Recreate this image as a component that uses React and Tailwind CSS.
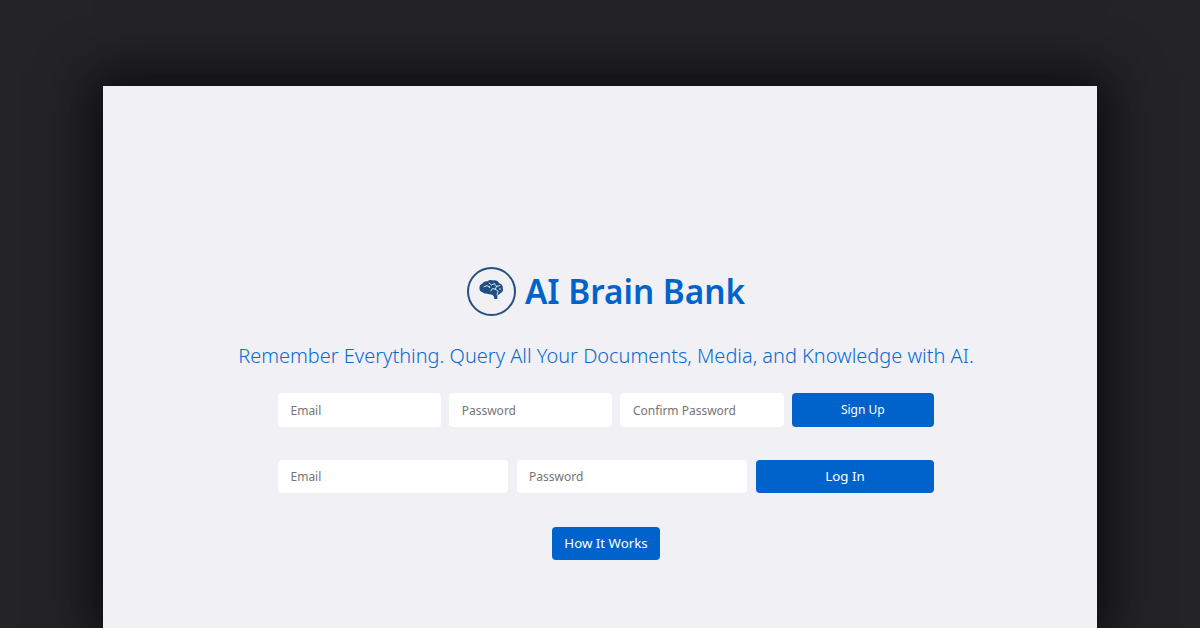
import React from "react";

function Field({ placeholder, type = "text", className = "min-w-0 flex-1" }) {
  return (
    <input
      type={type}
      placeholder={placeholder}
      className={`${className} h-full rounded-[4px] bg-white px-[12.5px] text-[12px] text-[#495057] outline-none placeholder:text-[#757575]`}
    />
  );
}

function BrainLogo() {
  return (
    <div className="flex h-[49px] w-[49px] shrink-0 items-center justify-center rounded-full border-2 border-[#26507f]">
      <svg width="26" height="24" viewBox="0 0 26 24" className="mt-[-2px]">
        <path
          fill="#1f4f82"
          d="M1.500 10.200C1 7.900 2.600 6 4.600 5.400 5.600 3.400 8 2.800 9.500 3.300 11 1.700 13.800 1.600 15.300 2.500 17.800 1.900 20.300 3.200 21.200 5.200 23.600 5.800 25.200 8 24.700 10 25.700 12 24.700 14.400 22.500 15 21.800 16.400 20.600 17 19.400 16.700L19.300 21 16.300 21C16.400 19.600 16.100 18.400 14.900 17.200 12.800 16.200 10.400 16.300 8.500 15.600 6.500 15.800 5 14.800 3.900 14 2.500 13.600 1.300 12 1.500 10.200Z"
        />
        <path
          fill="none"
          stroke="#f0f0f5"
          strokeWidth="0.9"
          strokeLinecap="round"
          strokeLinejoin="round"
          d="M6 8.800 9 7.600 11.500 9M11 5 13.500 7 16.500 5.700M16.500 5.700 18.500 8.300 21.800 7.700M18.500 8.300 17.300 11.300 20.200 13.200 19 16.500M17.300 11.300 14.300 10.500 13 12.800"
        />
        <circle cx="22" cy="11" r="0.8" fill="#f0f0f5" />
        <circle cx="11.500" cy="9" r="0.8" fill="#f0f0f5" />
      </svg>
    </div>
  );
}

export default function App() {
  return (
    <div className="h-[628px] w-[1200px] overflow-hidden bg-[#242428] pl-[103px] pt-[86px] font-['Noto_Sans',sans-serif]">
      <main className="flex h-[542px] w-[994px] flex-col items-center bg-[#f0f0f5] pl-[12px] pt-[180px] shadow-[0_0_48px_12px_rgba(8,8,8,0.85)]">
        <header className="flex h-[50px] items-center gap-[9px]">
          <BrainLogo />
          <h1 className="text-[33.3px] font-semibold leading-[50px] text-[#0063cc]">AI Brain Bank</h1>
        </header>
        <p className="mt-[25px] text-[19.95px] font-light leading-[30px] text-[#0a6ad2]">
          Remember Everything. Query All Your Documents, Media, and Knowledge with AI.
        </p>
        <form className="mt-[22px] flex h-[34px] w-[656px] gap-2">
          <Field placeholder="Email" type="email" />
          <Field placeholder="Password" type="password" />
          <Field placeholder="Confirm Password" type="password" />
          <button type="button" className="h-full w-[142.4px] shrink-0 rounded-[4px] bg-[#0063cc] text-[12px] text-white">
            Sign Up
          </button>
        </form>
        <form className="mt-[33px] flex h-[33px] w-[656px] gap-[8.6px]">
          <Field placeholder="Email" type="email" className="w-[230px] shrink-0" />
          <Field placeholder="Password" type="password" />
          <button type="button" className="h-full w-[178px] shrink-0 rounded-[4px] bg-[#0063cc] text-[13.3px] text-white">
            Log In
          </button>
        </form>
        <button type="button" className="mt-[34px] h-[33px] w-[108px] rounded-[4px] bg-[#0063cc] text-[13.3px] text-white">
          How It Works
        </button>
      </main>
    </div>
  );
}
